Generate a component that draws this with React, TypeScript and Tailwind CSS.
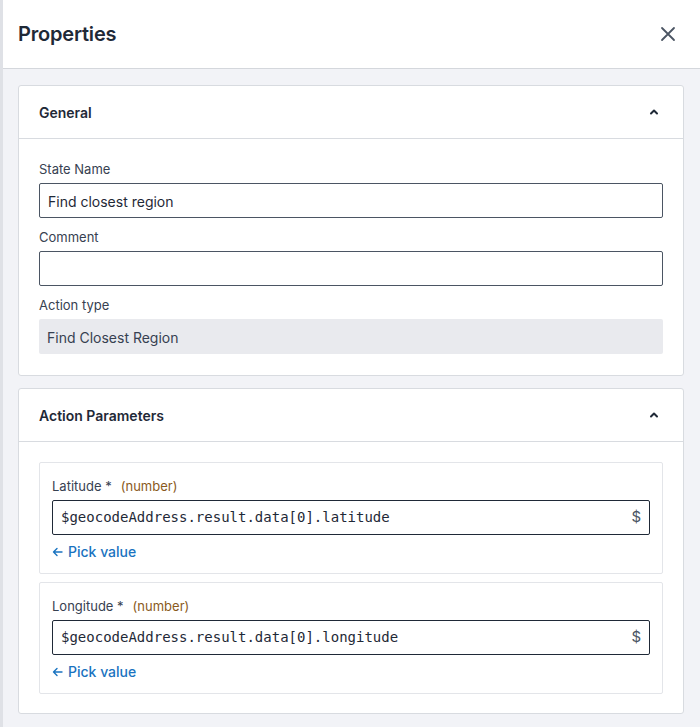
import React from 'react';

type FieldProps = {
  label: string;
  children: React.ReactNode;
};

const Field: React.FC<FieldProps> = ({label, children}) => (
  <div>
    <div className="text-[13px] leading-[18px] text-[#374151] mb-[5px]">{label}</div>
    {children}
  </div>
);

const ChevronUp = () => (
  <svg width="10" height="8" viewBox="0 0 10 8" className="text-[#1f2937]">
    <path d="M2 5.5 5 2.5 8 5.5" fill="none" stroke="currentColor" strokeWidth="2" strokeLinecap="round" strokeLinejoin="round" />
  </svg>
);

const Section: React.FC<{title: string; children: React.ReactNode}> = ({title, children}) => (
  <section className="bg-white border border-[#d8dbe0] rounded-[3px]">
    <div className="h-[53px] flex items-center justify-between pl-5 pr-6 border-b border-[#d8dbe0]">
      <h2 className="text-[14px] font-semibold text-[#1f2937]">{title}</h2>
      <ChevronUp />
    </div>
    {children}
  </section>
);

const ParamInput: React.FC<{label: string; type: string; value: string}> = ({label, type, value}) => (
  <div className="border border-[#e3e5e9] rounded-[2px] px-3 pt-[14px] pb-[12px]">
    <div className="text-[13px] leading-[18px] text-[#374151] mb-[5px]">
      {label} *<span className="ml-[9px] text-[#8a5a1c]">({type})</span>
    </div>
    <div className="h-[35px] border border-[#1f2937] rounded-[2px] flex items-center justify-between pl-2 pr-[8px]">
      <span className="text-[14px] text-[#1f2937]" style={{fontFamily: '"DejaVu Sans Mono", monospace'}}>
        {value}
      </span>
      <span className="text-[15px] text-[#4b5563]">$</span>
    </div>
    <button className="mt-[8px] h-[18px] flex items-center gap-[5px] text-[14px] leading-[18px] font-medium text-[#1a73c0]">
      <svg width="11" height="10" viewBox="0 0 11 10">
        <path d="M10 5H1.5M5 1.5 1.5 5 5 8.5" fill="none" stroke="currentColor" strokeWidth="1.4" strokeLinecap="round" strokeLinejoin="round" />
      </svg>
      Pick value
    </button>
  </div>
);

const App: React.FC = () => {
  return (
    <div
      className="min-h-[727px] w-[700px] bg-[#f2f3f7] border-l-[3px] border-[#dfe1e6] flex flex-col text-[#1f2937]"
      style={{fontFamily: 'Inter, "Noto Sans", sans-serif'}}>
      <header className="h-[69px] bg-white border-b border-[#d4d7dc] flex items-center justify-between pl-[15px] pr-[24px] shrink-0">
        <h1 className="text-[20px] font-semibold text-[#1f2937] tracking-[-0.2px]">Properties</h1>
        <button className="text-[#4b5563]">
          <svg width="16" height="16" viewBox="0 0 16 16">
            <path d="M2 2 14 14M14 2 2 14" fill="none" stroke="currentColor" strokeWidth="1.8" strokeLinecap="round" />
          </svg>
        </button>
      </header>

      <main className="flex flex-col gap-[12px] pl-[15px] pr-[16px] pt-[16px] pb-[13px]">
        <Section title="General">
          <div className="px-5 pt-[21px] pb-[21px] flex flex-col gap-[10px]">
            <Field label="State Name">
              <div className="h-[35px] border border-[#4b5563] rounded-[2px] flex items-center px-2 pt-px text-[14px] text-[#1f2937]">
                Find closest region
              </div>
            </Field>
            <Field label="Comment">
              <div className="h-[35px] border border-[#4b5563] rounded-[2px]" />
            </Field>
            <Field label="Action type">
              <div className="h-[35px] bg-[#e9eaee] rounded-[2px] flex items-center px-2 pt-px text-[14px] text-[#374151]">
                Find Closest Region
              </div>
            </Field>
          </div>
        </Section>

        <Section title="Action Parameters">
          <div className="px-5 pt-[20px] pb-[19px] flex flex-col gap-[8px]">
            <ParamInput label="Latitude" type="number" value="$geocodeAddress.result.data[0].latitude" />
            <ParamInput label="Longitude" type="number" value="$geocodeAddress.result.data[0].longitude" />
          </div>
        </Section>
      </main>
    </div>
  );
};

export default App;
